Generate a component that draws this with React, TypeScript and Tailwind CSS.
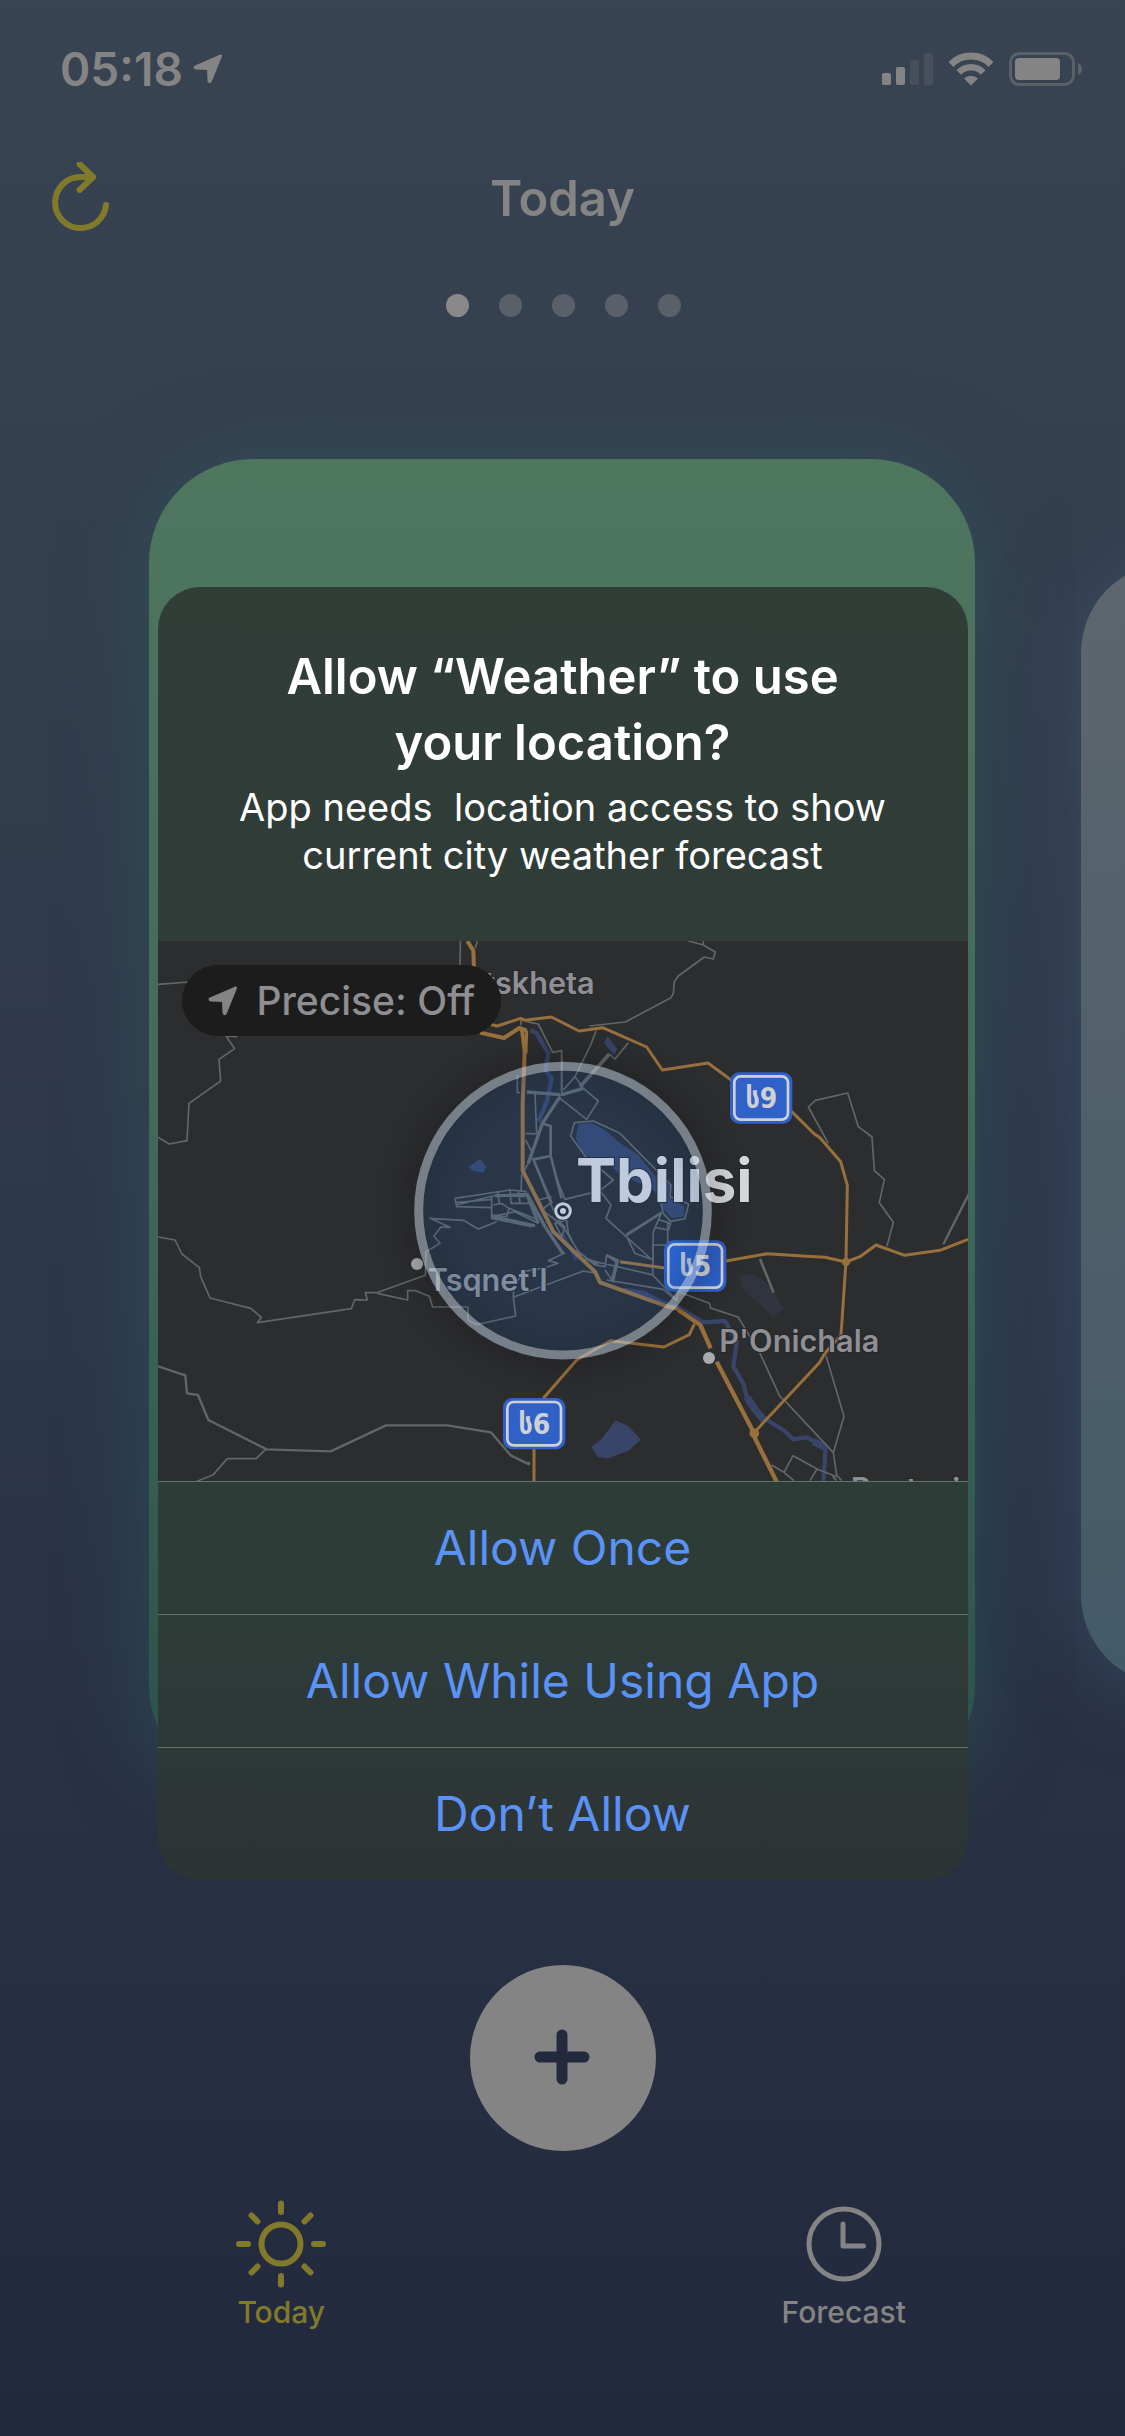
import React from "react";

const ROAD = "#616667";
const WATER = "#384468";
const HIGHWAY = "#98703c";

function LocationArrow({ className }: { className: string }) {
  return (
    <svg viewBox="0 0 30 30" className={className} fill="currentColor" stroke="currentColor" strokeWidth="3" strokeLinejoin="round" aria-hidden="true">
      <path d="M27.5 2 L2 13.2 Q2 14 3 14 L15.5 14.5 L16 27 Q16.6 28.4 17.4 27 Z" />
    </svg>
  );
}

function StatusBar() {
  return (
    <div className="flex h-[132px] items-center justify-between pt-[6px] pr-[43px] pl-[60px] text-[#848484]">
      <div className="flex items-center gap-[10px]">
        <span className="text-[46px] leading-none font-semibold">05:18</span>
        <LocationArrow className="size-[30px]" />
      </div>
      <div className="flex items-center gap-[15px]">
        <svg viewBox="0 0 51 34" className="h-[34px] w-[51px]" fill="currentColor" aria-hidden="true">
          <rect x="0" y="21" width="9" height="12" rx="2" />
          <rect x="14" y="15" width="9" height="18" rx="2" />
          <rect x="28" y="8" width="9" height="25" rx="2" opacity=".2" />
          <rect x="42" y="1" width="9" height="32" rx="2" opacity=".2" />
        </svg>
        <svg viewBox="0 0 46 34" className="h-[34px] w-[46px]" aria-hidden="true">
          <path d="M3 12.5 A28 28 0 0 1 43 12.5" fill="none" stroke="currentColor" strokeWidth="7" />
          <path d="M10.8 20.5 A17 17 0 0 1 35.2 20.5" fill="none" stroke="currentColor" strokeWidth="6.5" />
          <path d="M16 26.5 A10 10 0 0 1 30 26.5 L23 33.5 Z" fill="currentColor" />
        </svg>
        <svg viewBox="0 0 73 34" className="h-[34px] w-[73px]" aria-hidden="true">
          <rect x="1.5" y="1.5" width="63" height="31" rx="9" fill="none" stroke="currentColor" strokeWidth="3" opacity=".45" />
          <rect x="6" y="6" width="45" height="22" rx="4" fill="currentColor" />
          <path d="M69 11 Q73 13 73 17 Q73 21 69 23 Z" fill="currentColor" opacity=".5" />
        </svg>
      </div>
    </div>
  );
}

function Header() {
  return (
    <header className="grid h-[132px] grid-cols-3 items-center px-[52px]">
      <button type="button" aria-label="Refresh" className="w-[58px] text-[#817a2b]">
        <svg viewBox="0 4 58 72" className="h-[72px] w-[58px]" fill="none" stroke="currentColor" strokeWidth="6" strokeLinecap="round" strokeLinejoin="round">
          <path d="M54 46 A25.5 25.5 0 1 1 28.5 18 L41 18" transform="translate(0 1)" />
          <path d="M27.5 7 L41 20 L27.5 33" transform="translate(0 -1)" />
        </svg>
      </button>
      <h1 className="text-center text-[49px] leading-none font-semibold text-[#848484]">Today</h1>
    </header>
  );
}

function PageDots() {
  return (
    <div className="flex justify-center gap-[30px] pt-[30px] pl-px" aria-label="Page 1 of 5">
      {[0, 1, 2, 3, 4].map((i) => (
        <span key={i} className={i === 0 ? "size-[23px] rounded-full bg-[#8a8888]" : "size-[23px] rounded-full bg-[#596069]"} />
      ))}
    </div>
  );
}

function Carousel() {
  return (
    <div className="mt-[142px] flex items-center gap-[106px] pl-[149px]">
      <div className="h-[1330px] w-[calc(100%-150px)] shrink-0 rounded-[104px] bg-linear-to-b from-[#4f765f] via-[#42695a] to-[#2b524b] shadow-[0_8px_84px_0_rgba(44,98,96,0.5)]" />
      <div className="h-[1122px] w-[694px] shrink-0 rounded-[90px] bg-linear-to-b from-[#5d666d] to-[#435a68] shadow-[0_0_84px_0_rgba(66,92,120,0.5)]" />
    </div>
  );
}

function Shield({ x, y, digit }: { x: number; y: number; digit: string }) {
  return (
    <g>
      <rect x={x} y={y} width="187" height="154" rx="28" fill="#2f61c8" />
      <rect x={x + 13} y={y + 12} width="161" height="130" rx="19" fill="none" stroke="#cfd1d4" strokeWidth="8" />
      <text x={x + 94} y={y + 108} textAnchor="middle" fill="#cfd1d4" fontSize="84" fontWeight="700" fontFamily="'DejaVu Sans Condensed', 'DejaVu Sans', sans-serif">
        ს{digit}
      </text>
    </g>
  );
}

function MapView() {
  return (
    <svg viewBox="0 0 2430 1620" className="block w-full" role="img" aria-label="Map of Tbilisi" fontFamily="Inter, sans-serif">
      <defs>
        <filter id="soft" x="-20%" y="-20%" width="140%" height="140%">
          <feGaussianBlur stdDeviation="40" />
        </filter>
      </defs>
      <rect width="2430" height="1620" fill="#2c2d2f" />

      <g fill={WATER}>
        <path transform="translate(741 357)" d="M520 192 L560 188 L600 210 L640 245 L700 285 L752 350 L795 375 L790 412 L838 438 L838 470 L800 475 L778 450 L750 395 L640 338 L610 310 L535 283 L512 235Z M190 320 L225 297 L245 320 L235 338 L205 333Z M670 693 L720 700 L765 728 L720 718Z" />
        <path transform="translate(1206 807)" d="M95 712 L102 704 L125 686 L167 631 L205 648 L243 689 L205 722 L145 745 L112 742Z" />
        <path transform="translate(1206 -33)" d="M142 318 L172 358 L162 375 L132 340Z" />
        <path transform="translate(1206 807)" d="M535 200 L570 190 L610 208 L640 245 L672 295 L640 322 L590 275 L545 235Z" fill="#30343e" />
      </g>
      <g fill="none" stroke={WATER} strokeWidth="13" strokeLinejoin="round">
        <path transform="translate(-24 -33)" d="M1142 300 L1160 310 L1195 370 L1186 420 L1205 445 L1192 510 L1165 575" />
        <path transform="translate(1206 807)" d="M190 240 L250 248 L295 272 L355 292 L430 337 L495 333 L530 395 L520 470 L550 520 L565 580 L605 620 L670 660 L700 688 L740 682 L797 712 L790 815" />
        <path transform="translate(1206 807)" d="M560 560 L590 605 L612 630 M760 695 L797 712" strokeWidth="22" />
        <path transform="translate(741 357)" d="M470 520 L515 600" strokeWidth="9" />
      </g>

      <g fill="none" stroke={ROAD} strokeWidth="5" strokeLinejoin="round">
        <g transform="translate(-24 -33)">
          <path d="M24 163 L115 156 M931 33 L930 110 M982 33 L976 55 M262 320 L228 318 L254 356 L207 388 L212 453 L117 520 L111 632 L58 642 L24 622" />
          <path d="M1113 268 V285 M1130 275 L1165 282 L1208 367 L1235 362 V480" />
        </g>
        <g transform="translate(1206 -33)">
          <path d="M385 33 L430 45 L466 66 L460 87 L433 81 L355 138 L343 155 L340 190 L333 203 L196 276 L88 288 M430 33 V45" />
          <path d="M108 303 L92 345 L45 440 L10 480 M205 338 L165 387 L148 372" />
          <path d="M148 372 L60 470" strokeWidth="11" />
          <path d="M805 640 L745 531 L766 511 L863 489 L895 590 L936 621 L943 722 L973 748 L958 818 L1000 877 L981 948" />
          <path d="M1230 785 L1150 943" strokeWidth="7" />
        </g>
        <g transform="translate(-24 807)">
          <path d="M24 81 L75 90 L96 132 L148 173 L152 200 L180 264 L302 295 L334 322 L322 338 L604 296 L614 269 L652 270 L646 248 L680 248 L826 196 L828 125 L870 100 L852 78 L873 51 L900 52 L840 25 L940 31 L985 57 L1040 35" />
          <path d="M682 250 L773 270 L773 242 L797 242 L838 259 L848 291 L954 291 V330 L980 344 L1097 318 L1090 262 L1300 183 L1335 189 M1090 262 L1092 230 L1120 185 L1190 172 L1224 160 L1195 152 L1245 128" />
          <path d="M24 469 L106 496 L111 550 L144 555 L175 630 L350 718 L542 724 L708 646 L892 646 L1023 667 L1082 736 L1137 763 V755" strokeWidth="7" />
          <path d="M350 715 L318 746 L232 746 L190 794 L138 815" />
        </g>
        <g transform="translate(1206 807)">
          <path d="M600 147 L641 248" strokeWidth="8" />
          <path d="M355 245 L448 280 L452 294 L535 322 L600 430 L660 560 L680 578 L820 728 L852 619 L798 437 M820 728 L830 795 L845 812 M635 765 L672 787 L699 737 L771 777 L830 800 M672 787 L702 812 M771 777 L750 812 M818 800 L830 812" />
        </g>
        <g transform="translate(741 357)">
          <path d="M337 45 V98 H345 M465 106 L535 85 L580 123 L545 178 L465 115 M470 105 V0 M510 50 L535 85 M465 110 L415 190 M390 100 L395 222 L362 220 M362 240 L380 275" />
          <path d="M365 96 L465 104 M465 110 L412 190 L370 310 M535 85 L470 104" strokeWidth="10" />
          <path d="M410 190 L437 198 V288 L470 415 M437 288 L385 298 L440 430" strokeWidth="8" />
          <path d="M455 355 L480 418 L585 392 L625 360 L540 288 L497 228 L508 188 L565 183 L645 220 L798 375 L795 410 L851 432 L840 476 L797 484 L775 460 L768 430" />
          <path d="M370 310 L350 345 L348 395 M585 392 L618 435 L603 475 L745 603 M664 525 L770 458 M665 530 L690 580 L745 600 L743 555 H788 V490 M758 478 L797 490 L790 510 L750 502 M770 458 L745 515 L743 645 L815 720" />
          <path d="M664 525 L770 458" strokeWidth="8" />
          <path d="M150 415 L315 390 L365 395 M150 415 L155 440 L260 443 M155 435 L275 405 L360 410 M152 428 L260 418 M260 410 V475 L380 500 M265 435 L290 430 L312 445 L305 470 L262 465 M312 445 L400 480 M280 395 L282 430 M315 390 L318 430 L375 430 M340 390 L345 430 M262 470 L330 455 L400 490" />
          <path d="M265 470 L390 497 M270 408 L365 403 L400 490" strokeWidth="9" />
          <path d="M365 400 L420 500 L475 582" strokeWidth="10" />
          <path d="M390 310 L445 450 L505 550 L530 590 M435 430 L410 450 L480 500 L470 530 L450 490 L485 480 L490 520 L505 550 M400 420 L440 410 M440 470 L480 510" />
          <path d="M515 570 L570 615 L600 620 L605 585 L640 600 L625 665 L600 630 M550 600 L745 645 M605 660 L775 688 L815 722 L820 695" />
          <path d="M540 595 L580 612 M605 585 L635 605 L620 665" strokeWidth="8" />
        </g>
      </g>

      <g fill="none" stroke={HIGHWAY} strokeWidth="9" strokeLinejoin="round">
        <g transform="translate(-24 -33)">
          <path d="M952 33 L970 62 L972 120 M990 308 L1062 324 L1108 294 L1130 302" strokeWidth="12" />
          <path d="M1020 283 L1042 288 L1112 265 L1125 271 L1204 261 L1287 303 L1358 293 L1490 351 L1537 420 L1674 399 L1770 470" />
          <path d="M1116 298 L1124 365 L1118 520 V722 L1210 905 L1335 1025 L1350 1057 L1545 1127 L1585 1137" strokeWidth="12" />
          <path d="M1130 302 L1128 370" />
        </g>
        <g transform="translate(1206 -33)">
          <path d="M680 530 L763 612 L780 623 L842 695 L862 766 L858 995 L843 1215 L795 1270 L778 1298 L585 1505" />
        </g>
        <g transform="translate(1206 807)">
          <path d="M180 155 L320 175 M498 153 L622 131 L740 139 L795 142 L858 156 L900 140 L948 105 L1034 136 L1140 121 L1224 88" />
          <path d="M403 342 L388 374 L312 411 L152 392 L50 450 L-50 565 M-78 700 V815" />
          <path d="M355 300 L421 345 L452 415 M470 455 L580 665 L585 685 L610 735 L650 815" strokeWidth="13" />
          <circle cx="858" cy="156" r="8" fill={HIGHWAY} />
          <circle cx="583" cy="670" r="10" fill={HIGHWAY} />
        </g>
      </g>

      <g fill="#8e9095" fontSize="92" fontWeight="600" stroke="#26272a" strokeWidth="6" paintOrder="stroke">
        <text x="1310" y="159" textAnchor="end">Mtskheta</text>
        <text x="809" y="1049">Tsqnet&#39;I</text>
        <text x="1684" y="1233">P&#39;Onichala</text>
        <text x="2078" y="1676">Rustavi</text>
      </g>
      <text x="1254" y="784" fill="#d5d7db" fontSize="180" fontWeight="700" stroke="#26272a" strokeWidth="6" paintOrder="stroke">
        Tbilisi
      </text>
      <g fill="#a9abae">
        <circle cx="777" cy="969" r="18" />
        <circle cx="1653" cy="1251" r="18" />
      </g>
      <Shield x={1716} y={394} digit="9" />
      <Shield x={1518} y={898} digit="5" />
      <Shield x={1035} y={1371} digit="6" />

      <circle cx="1215" cy="809" r="446" fill="none" stroke="#000" strokeWidth="60" opacity=".22" filter="url(#soft)" />
      <circle cx="1215" cy="809" r="446" fill="#1b78f7" opacity=".12" />
      <circle cx="1215" cy="809" r="433" fill="none" stroke="#fff" strokeWidth="27" opacity=".38" />
      <circle cx="1215" cy="810" r="29" fill="#26303e" />
      <circle cx="1215" cy="810" r="22" fill="none" stroke="#becbde" strokeWidth="9" />
      <circle cx="1215" cy="810" r="9" fill="#becbde" />
    </svg>
  );
}

const ACTIONS = ["Allow Once", "Allow While Using App", "Don’t Allow"];

function LocationDialog() {
  return (
    <div className="absolute inset-0 flex items-center justify-center pt-[31px]">
      <section role="dialog" aria-labelledby="ask-title" aria-describedby="ask-body" className="w-[72%] overflow-hidden rounded-[42px] bg-linear-to-b from-[#313d37] via-[#2e3c38] via-80% to-[#2d3335]">
        <div className="px-[72px] pt-[57px] pb-[62px] text-center text-white">
          <h2 id="ask-title" className="text-[49px] leading-[66px] font-semibold">
            Allow “Weather” to use
            <br />
            your location?
          </h2>
          <p id="ask-body" className="mt-[7px] text-[38px] leading-[48px]">
            App needs&nbsp; location access to show
            <br />
            current city weather forecast
          </p>
        </div>
        <div className="relative">
          <MapView />
          <button type="button" className="absolute top-[24px] left-[24px] flex h-[71px] items-center gap-[19px] rounded-full bg-[#1c1c1c] px-[26px] text-[#8e8e93]">
            <LocationArrow className="size-[30px] text-[#848484]" />
            <span className="text-[39px] leading-none font-medium">Precise: Off</span>
          </button>
        </div>
        {ACTIONS.map((label) => (
          <button key={label} type="button" className="block h-[133px] w-full border-t border-[#5f786f] text-[48px] leading-none text-[#5b92f7]">
            {label}
          </button>
        ))}
      </section>
    </div>
  );
}

function TabBar() {
  return (
    <nav className="mt-[43px] grid grid-cols-2 pb-[98px] text-[30px] leading-[36px] font-medium text-[#848484]">
      <a href="#today" aria-current="page" className="flex flex-col items-center text-[#817a2b]">
        <svg viewBox="-50 -50 100 100" className="size-[100px]" fill="none" stroke="currentColor" strokeWidth="6" strokeLinecap="round" aria-hidden="true">
          <circle r="19.5" />
          <path d="M0 -40.5 V-32 M0 32 V40.5 M-42 0 H-33 M33 0 H42 M-29.5 -28.5 L-23.5 -22.5 M29.5 -28.5 L23.5 -22.5 M-29.5 28.5 L-23.5 22.5 M29.5 28.5 L23.5 22.5" />
        </svg>
        Today
      </a>
      <a href="#forecast" className="flex flex-col items-center">
        <svg viewBox="-50 -50 100 100" className="size-[100px]" fill="none" stroke="currentColor" strokeWidth="5" strokeLinecap="round" strokeLinejoin="round" aria-hidden="true">
          <circle r="35" />
          <path d="M-1 -20 V2 H19.5" />
        </svg>
        Forecast
      </a>
    </nav>
  );
}

export default function App() {
  return (
    <div className="relative flex min-h-screen w-full flex-col overflow-hidden bg-linear-to-b from-[#384452] via-[#2d374a] via-55% to-[#23293c] font-['Inter',sans-serif]">
      <StatusBar />
      <Header />
      <PageDots />
      <Carousel />
      <div className="mt-[176px] flex justify-center">
        <button type="button" aria-label="Add city" className="flex size-[186px] items-center justify-center rounded-full bg-[#848484] text-[#242a3e]">
          <svg viewBox="0 0 60 60" className="size-[60px]" fill="none" stroke="currentColor" strokeWidth="11" strokeLinecap="round">
            <path d="M29 7 V51 M7 29 H51" />
          </svg>
        </button>
      </div>
      <TabBar />
      <LocationDialog />
    </div>
  );
}
